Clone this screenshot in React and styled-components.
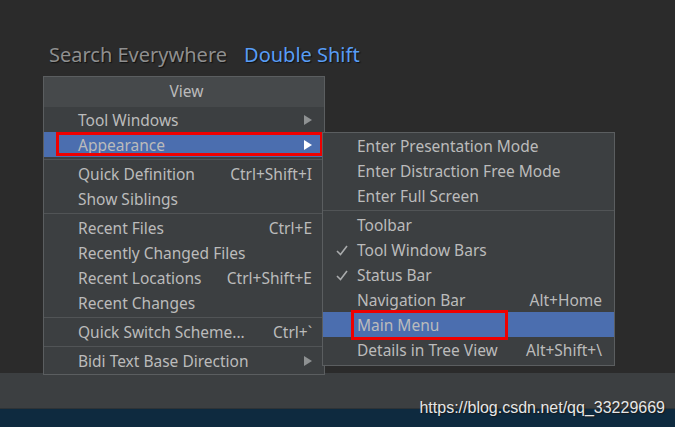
import React from 'react'
import styled, { createGlobalStyle } from 'styled-components'

const mainItems = [
  { label: 'Tool Windows', arrow: true },
  { label: 'Appearance', arrow: true, selected: true, marked: true },
  { sep: true },
  { label: 'Quick Definition', shortcut: 'Ctrl+Shift+I' },
  { label: 'Show Siblings' },
  { sep: true },
  { label: 'Recent Files', shortcut: 'Ctrl+E' },
  { label: 'Recently Changed Files' },
  { label: 'Recent Locations', shortcut: 'Ctrl+Shift+E' },
  { label: 'Recent Changes' },
  { sep: true },
  { label: 'Quick Switch Scheme...', shortcut: 'Ctrl+`' },
  { sep: true },
  { label: 'Bidi Text Base Direction', arrow: true },
]

const subItems = [
  { label: 'Enter Presentation Mode' },
  { label: 'Enter Distraction Free Mode' },
  { label: 'Enter Full Screen' },
  { sep: true },
  { label: 'Toolbar' },
  { label: 'Tool Window Bars', checked: true },
  { label: 'Status Bar', checked: true },
  { label: 'Navigation Bar', shortcut: 'Alt+Home' },
  { label: 'Main Menu', selected: true, marked: true },
  { label: 'Details in Tree View', shortcut: 'Alt+Shift+\\' },
]

const Arrow = ({ light }) => (
  <svg width="8" height="10" viewBox="0 0 8 10">
    <path d="M0 0 L8 5 L0 10 Z" fill={light ? '#ffffff' : '#8e9192'} />
  </svg>
)

const Check = () => (
  <svg width="12" height="11" viewBox="0 0 12 11">
    <path d="M1 6 L4.5 9.5 L11 1" fill="none" stroke="#a9abac" strokeWidth="1.6" />
  </svg>
)

const MenuList = ({ items, sub }) =>
  items.map((it, i) =>
    it.sep ? (
      <Separator key={i} />
    ) : (
      <Row key={i} $selected={it.selected}>
        <CheckSlot>{it.checked && <Check />}</CheckSlot>
        <Label>{it.label}</Label>
        {it.shortcut && <Shortcut>{it.shortcut}</Shortcut>}
        {it.arrow && <ArrowSlot><Arrow light={it.selected} /></ArrowSlot>}
        {it.marked && <Mark $sub={sub} />}
      </Row>
    )
  )

const App = () => {
  return (
    <Page>
      <GlobalStyle />
      <Stage>
        <Title>
          Search Everywhere<Hint>Double Shift</Hint>
        </Title>
        <Menus>
          <Menu>
            <Header>View</Header>
            <MenuList items={mainItems} />
          </Menu>
          <SubMenu>
            <MenuList items={subItems} sub />
          </SubMenu>
        </Menus>
      </Stage>
      <StatusArea />
      <BlueStrip />
      <Watermark>https://blog.csdn.net/qq_33229669</Watermark>
    </Page>
  )
}

//STYLED COMPONENTS
const GlobalStyle = createGlobalStyle`
  html, body {
    margin: 0;
    padding: 0;
    background: #2b2b2b;
  }
  * {
    box-sizing: border-box;
  }
`;

const Page = styled.div`
  position: relative;
  width: 675px;
  height: 427px;
  overflow: hidden;
  display: flex;
  flex-direction: column;
  background: #2b2b2b;
  font-family: "Noto Sans", "Open Sans", sans-serif;
`;

const Stage = styled.div`
  height: 373px;
  flex-shrink: 0;
  padding: 40px 0 0 43px;
  position: relative;
  z-index: 1;
`;

const Title = styled.div`
  height: 36px;
  padding-left: 6px;
  font-size: 20px;
  color: #8f8f8f;
  line-height: 29px;
  text-shadow: 1px 1px 1px #111;
`;

const Hint = styled.span`
  color: #589df6;
  margin-left: 17px;
`;

const Menus = styled.div`
  display: flex;
  align-items: flex-start;
`;

const Menu = styled.div`
  width: 282px;
  height: 299px;
  background: #3c3f41;
  border: 1px solid #5b5e60;
  display: flex;
  flex-direction: column;
`;

const SubMenu = styled.div`
  width: 293px;
  height: 234px;
  margin: 56px 0 0 -3px;
  background: #3c3f41;
  border: 1px solid #5b5e60;
  display: flex;
  flex-direction: column;
  position: relative;
  z-index: 2;
`;

const Header = styled.div`
  height: 30px;
  padding-left: 5px;
  background: #46494b;
  color: #bbbbbb;
  font-size: 15.5px;
  text-align: center;
  line-height: 29px;
`;

const Row = styled.div`
  position: relative;
  height: 25px;
  flex-shrink: 0;
  display: flex;
  align-items: center;
  padding: 0 12px 0 13px;
  background: ${p => (p.$selected ? '#4b6eaf' : 'transparent')};
  color: #bbbbbb;
  font-size: 15.5px;
`;

const CheckSlot = styled.span`
  width: 21px;
  flex-shrink: 0;
  display: flex;
  align-items: center;
  justify-content: flex-start;
  margin-top: 1px;
`;

const Label = styled.span`
  flex: 1;
  white-space: nowrap;
`;

const Shortcut = styled.span`
  white-space: nowrap;
  margin-left: 16px;
`;

const ArrowSlot = styled.span`
  display: flex;
  align-items: center;
`;

const Separator = styled.div`
  height: 4px;
  flex-shrink: 0;
  display: flex;
  align-items: center;
  &::after {
    content: '';
    flex: 1;
    height: 1px;
    background: #515456;
  }
`;

const Mark = styled.div`
  position: absolute;
  border: 3px solid #ee0000;
  top: ${p => (p.$sub ? '-2px' : '0')};
  bottom: ${p => (p.$sub ? '-3px' : '1px')};
  left: ${p => (p.$sub ? '28px' : '12px')};
  width: ${p => (p.$sub ? '157px' : '267px')};
  pointer-events: none;
`;

const StatusArea = styled.div`
  height: 35px;
  flex-shrink: 0;
  background: #3c3f41;
`;

const BlueStrip = styled.div`
  flex: 1;
  background: #0e2a3f;
  border-top: 1px solid #2e3336;
`;

const Watermark = styled.div`
  position: absolute;
  right: 10px;
  bottom: 10px;
  font-family: "Liberation Sans", Arial, sans-serif;
  font-size: 16px;
  color: #e6e6e6;
  text-shadow: 1px 1px 1px #1a1a1a;
  z-index: 3;
`;

export default App
